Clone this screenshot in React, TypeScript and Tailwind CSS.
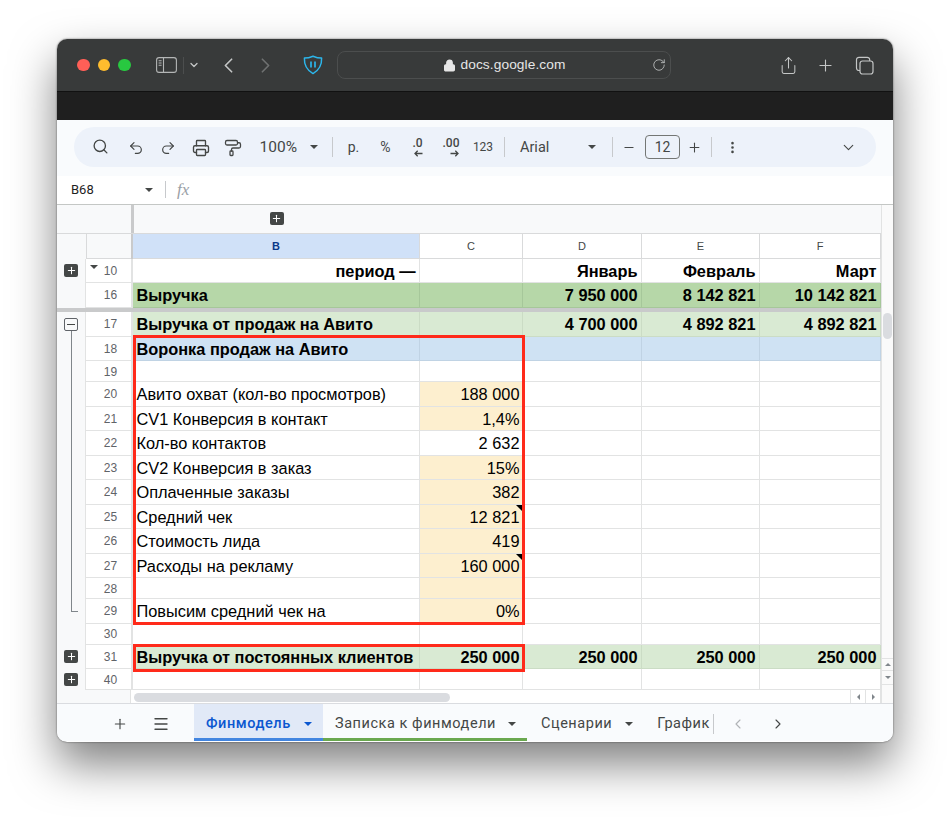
// Окно браузера с таблицей финмодели
import {
  ChevronDown,
  ChevronLeft,
  ChevronRight,
  Lock,
  Menu,
  Minus,
  MoreVertical,
  PaintRoller,
  Plus,
  Printer,
  Redo2,
  RotateCw,
  Search,
  Share,
  Undo2,
} from "lucide-react";

const ARIAL = "font-['Liberation_Sans',Arial,sans-serif]";
const UI = "font-['Roboto','Noto_Sans',sans-serif]";

interface Row {
  num: string;
  h: string;
  label?: string;
  c?: string;
  values?: string[];
  bold?: boolean;
  align?: string;
  bg?: string;
  line?: string;
  cBg?: string;
  note?: boolean;
  group?: "plus" | "minus" | "line" | "end";
}

const rows: Row[] = [
  { num: "10", h: "h-[24.5px]", label: "период —", values: ["Январь", "Февраль", "Март"], bold: true, align: "text-right", group: "plus" },
  { num: "16", h: "h-[24.5px]", label: "Выручка", values: ["7 950 000", "8 142 821", "10 142 821"], bold: true, bg: "bg-[#b6d7a8]", line: "border-[#a6c79a]" },
];

const rows2: Row[] = [
  { num: "17", h: "h-[24.5px]", label: "Выручка от продаж на Авито", values: ["4 700 000", "4 892 821", "4 892 821"], bold: true, bg: "bg-[#d9ead3]", line: "border-[#cbdcc5]", group: "minus" },
  { num: "18", h: "h-[24.5px]", label: "Воронка продаж на Авито", bold: true, bg: "bg-[#cfe2f3]", line: "border-[#c0d3e4]", group: "line" },
  { num: "19", h: "h-[21px]", group: "line" },
  { num: "20", h: "h-[24.5px]", label: "Авито охват (кол-во просмотров)", c: "188 000", cBg: "bg-[#fdefcf]", group: "line" },
  { num: "21", h: "h-[24.5px]", label: "CV1 Конверсия в контакт", c: "1,4%", cBg: "bg-[#fdefcf]", group: "line" },
  { num: "22", h: "h-[24.5px]", label: "Кол-во контактов", c: "2 632", group: "line" },
  { num: "23", h: "h-[24.5px]", label: "CV2 Конверсия в заказ", c: "15%", cBg: "bg-[#fdefcf]", group: "line" },
  { num: "24", h: "h-[24.5px]", label: "Оплаченные заказы", c: "382", cBg: "bg-[#fdefcf]", group: "line" },
  { num: "25", h: "h-[24.5px]", label: "Средний чек", c: "12 821", cBg: "bg-[#fdefcf]", note: true, group: "line" },
  { num: "26", h: "h-[24.5px]", label: "Стоимость лида", c: "419", cBg: "bg-[#fdefcf]", group: "line" },
  { num: "27", h: "h-[24.5px]", label: "Расходы на рекламу", c: "160 000", cBg: "bg-[#fdefcf]", note: true, group: "line" },
  { num: "28", h: "h-[21px]", cBg: "bg-[#fdefcf]", group: "line" },
  { num: "29", h: "h-[24.5px]", label: "Повысим средний чек на", c: "0%", cBg: "bg-[#fdefcf]", group: "end" },
  { num: "30", h: "h-[21px]" },
  { num: "31", h: "h-[24.5px]", label: "Выручка от постоянных клиентов", c: "250 000", values: ["250 000", "250 000", "250 000"], bold: true, bg: "bg-[#d9ead3]", line: "border-[#cbdcc5]", group: "plus" },
  { num: "40", h: "h-[21px]", group: "plus" },
];

function Caret({ className = "border-t-[#444746]" }: { className?: string }) {
  return <span className={`block w-0 h-0 border-x-[4px] border-x-transparent border-t-[4.5px] ${className}`} />;
}

function Divider() {
  return <span className="block w-px h-5 bg-[#c7c9cc]" />;
}

function PlusBox() {
  return (
    <span className="flex items-center justify-center w-[14px] h-[13px] rounded-[2px] bg-[#444746]">
      <Plus size={11} strokeWidth={2.2} className="text-white" />
    </span>
  );
}

function GroupCell({ group }: { group?: Row["group"] }) {
  return (
    <div className="relative w-[29px] h-full bg-[#f8f9fa] border-r border-[#e2e3e3] flex items-center justify-center">
      {group === "plus" && <PlusBox />}
      {group === "minus" && (
        <>
          <span className="z-10 flex items-center justify-center w-[14px] h-[13px] rounded-[2px] border border-[#5f6368] bg-[#f8f9fa]">
            <span className="block w-2 h-px bg-[#444746]" />
          </span>
          <span className="absolute left-[14px] top-[18px] bottom-0 w-px bg-[#80868b]" />
        </>
      )}
      {group === "line" && <span className="absolute left-[14px] top-0 bottom-0 w-px bg-[#80868b]" />}
      {group === "end" && (
        <>
          <span className="absolute left-[14px] top-0 h-[12px] w-px bg-[#80868b]" />
          <span className="absolute left-[14px] top-[12px] h-px w-[7px] bg-[#80868b]" />
        </>
      )}
    </div>
  );
}

function SheetRow({ row }: { row: Row }) {
  const line = row.line ?? "border-[#e2e3e3]";
  const text = `${ARIAL} text-[16.35px] text-black whitespace-nowrap pt-[1px] ${row.bold ? "font-bold" : ""}`;
  const cell = `h-full flex items-center justify-end pl-[3.5px] border-r border-b ${line} ${text}`;
  const values = row.values ?? ["", "", ""];
  return (
    <div className={`flex ${row.h} ${row.bg ?? ""}`}>
      <GroupCell group={row.group} />
      <div className={`relative w-[47px] h-full shrink-0 bg-white border-r-2 border-b border-[#e2e3e3] flex items-center justify-center pl-1 pt-[1px] text-[12px] text-[#5f6368] ${ARIAL}`}>
        {row.num === "10" && <span className="absolute left-[4px] top-[6px]"><Caret className="border-t-[#444746]" /></span>}
        {row.num}
      </div>
      <div className={`w-[287px] h-full flex items-center px-[3.5px] border-r border-b ${line} ${text} ${row.align ?? ""} ${row.align ? "justify-end" : ""}`}>
        {row.label}
      </div>
      <div className={`relative w-[103px] pr-[2.5px] ${cell} ${row.cBg ?? ""}`}>
        {row.c}
        {row.note && (
          <span className="absolute top-0 right-0 w-0 h-0 border-l-[6px] border-l-transparent border-t-[6px] border-t-black" />
        )}
      </div>
      <div className={`w-[119px] pr-[3.5px] ${cell}`}>{values[0]}</div>
      <div className={`w-[118px] pr-[3.5px] ${cell}`}>{values[1]}</div>
      <div className={`w-[121px] pr-[3.5px] ${cell}`}>{values[2]}</div>
    </div>
  );
}

function Slot({ w, children }: { w: string; children: React.ReactNode }) {
  return <div className={`${w} shrink-0 flex items-center justify-center`}>{children}</div>;
}

function TitleBar() {
  return (
    <div className="h-[53px] bg-[#383a3a] border-b border-[#111] flex items-center text-[#c4c6c6]">
      <div className="flex items-center gap-[8px] ml-[20px] w-[64px]">
        <span className="w-[12.5px] h-[12.5px] rounded-full bg-[#ff5f57]" />
        <span className="w-[12.5px] h-[12.5px] rounded-full bg-[#febc2e]" />
        <span className="w-[12.5px] h-[12.5px] rounded-full bg-[#28c840]" />
      </div>
      <svg width="21" height="16" viewBox="0 0 21 16" fill="none" stroke="#b4b6b6" strokeWidth="1.1" className="ml-[15px]">
        <rect x="0.6" y="0.6" width="19.8" height="14.8" rx="2.5" />
        <path d="M7.5 0.6v14.8M2.6 3.8h3M2.6 6h3M2.6 8.2h3" />
      </svg>
      <span className="ml-[6px] w-px h-[17px] bg-[#4c4e4e]" />
      <ChevronDown size={12} strokeWidth={2.6} className="ml-[4px]" />
      <ChevronLeft size={25} strokeWidth={1.6} className="ml-[16px]" />
      <ChevronRight size={25} strokeWidth={1.6} className="ml-[12px] text-[#6f7171]" />
      <svg width="20" height="20" viewBox="0 0 20 20" fill="none" className="ml-[25px]">
        <path d="M10 1.2c3 1.3 5.800 1.900 8.600 1.900 .3 6.500-2.400 12-8.600 15.500C3.800 15.100 1.100 9.600 1.400 3.100c2.800 0 5.600-.6 8.600-1.900z" stroke="#2cb5ea" strokeWidth="1.500" strokeLinejoin="round" />
        <path d="M8 6.500v6M12 6.500v6" stroke="#2cb5ea" strokeWidth="1.700" />
      </svg>
      <div className="relative ml-[14px] w-[334px] h-[28px] rounded-[8px] border border-[#4c4e4e] flex items-center justify-center gap-[5px] text-[13.7px] text-[#e6e6e6]">
        <Lock size={13} strokeWidth={2.4} fill="#e6e6e6" />
        <span className={`${ARIAL} font-medium tracking-[0.1px]`}>docs.google.com</span>
        <RotateCw size={14} strokeWidth={1.4} className="absolute right-[4px] top-[6px] text-[#c4c6c6]" />
      </div>
      <Share size={19} strokeWidth={1.3} className="ml-[108px]" />
      <Plus size={19} strokeWidth={1.4} className="ml-[18px]" />
      <svg width="19" height="19" viewBox="0 0 19 19" fill="none" stroke="#c4c6c6" strokeWidth="1.2" className="ml-[20px]">
        <rect x="5" y="5" width="13" height="13" rx="2.5" />
        <path d="M5 14.500h-1a2.500 2.500 0 0 1-2.500-2.500V3.800a2.500 2.500 0 0 1 2.500-2.500h8.200a2.500 2.500 0 0 1 2.500 2.500V5" />
      </svg>
    </div>
  );
}

function DecimalIcon({ label, dir }: { label: string; dir: "left" | "right" }) {
  return (
    <span className="flex flex-col items-end text-[12px] font-medium leading-none">
      <span>{label}</span>
      <svg width="9" height="7" viewBox="0 0 9 7" fill="none" stroke="#444746" strokeWidth="1.300" className="mt-[1px]">
        {dir === "left" ? <path d="M8.500 3.500H1.200M3.700 .8L1 3.500l2.700 2.700" /> : <path d="M.5 3.500h7.300M5.300 .8L8 3.500 5.300 6.200" />}
      </svg>
    </span>
  );
}

function Toolbar() {
  const icon = "text-[#444746]";
  return (
    <div className="h-[56px] bg-[#f9fbfd] pt-[7px] pl-[17px] pr-[17px]">
      <div className={`h-[40px] rounded-[20px] bg-[#edf2fa] flex items-center text-[#444746] ${UI}`}>
        <div className="w-[10px] shrink-0" />
        <Slot w="w-[32px]"><Search size={17} strokeWidth={1.9} className={`${icon} -mt-[1px]`} /></Slot>
        <Slot w="w-[40px]"><Undo2 size={16} strokeWidth={1.8} className={`${icon} mt-[2px]`} /></Slot>
        <Slot w="w-[24px]"><Redo2 size={16} strokeWidth={1.8} className={`${icon} mt-[2px]`} /></Slot>
        <Slot w="w-[42px]"><Printer size={18} strokeWidth={1.8} className={`${icon} mt-[1px]`} /></Slot>
        <Slot w="w-[22px]"><PaintRoller size={18} strokeWidth={1.7} className={`${icon} mt-[1px]`} /></Slot>
        <Slot w="w-[53px] justify-end text-[15.5px] pt-[2px]">100%</Slot>
        <Slot w="w-[34px]"><Caret /></Slot>
        <Slot w="w-[3px]"><Divider /></Slot>
        <Slot w="w-[39px] text-[14px]">р.</Slot>
        <Slot w="w-[25px] text-[14px]">%</Slot>
        <Slot w="w-[39px]"><DecimalIcon label=".0" dir="left" /></Slot>
        <Slot w="w-[28px]"><DecimalIcon label=".00" dir="right" /></Slot>
        <Slot w="w-[36px] text-[12px]">123</Slot>
        <Slot w="w-[6px]"><Divider /></Slot>
        <span className="ml-[13px] w-[62px] text-[14.5px] pt-[1px]">Arial</span>
        <Slot w="w-[20px]"><Caret /></Slot>
        <Slot w="w-[20px]"><Divider /></Slot>
        <Slot w="w-[14px]"><Minus size={15} strokeWidth={1.7} /></Slot>
        <div className="ml-[9px] w-[35px] h-[24px] rounded-[4px] border border-[#747775] flex items-center justify-center text-[14px]">12</div>
        <Slot w="w-[29px]"><Plus size={15} strokeWidth={1.7} /></Slot>
        <Slot w="w-[5px]"><Divider /></Slot>
        <Slot w="w-[37px]"><MoreVertical size={15} strokeWidth={2.2} /></Slot>
        <Slot w="w-[106px] justify-end"><ChevronDown size={17} strokeWidth={1.6} /></Slot>
      </div>
    </div>
  );
}

function FormulaBar() {
  return (
    <div className={`h-[28.5px] bg-white border-b border-[#c4c7c5] flex items-center text-[13px] text-[#1f1f1f] ${UI}`}>
      <span className={`ml-[14px] w-[74px] ${UI}`}>B68</span>
      <Caret />
      <span className="ml-[12px] w-px h-[17px] bg-[#c7c9cc]" />
      <span className="ml-[11px] font-['Liberation_Serif',serif] italic text-[17px] text-[#9aa0a6]">fx</span>
    </div>
  );
}

function SheetGrid() {
  const head = `h-full flex items-center justify-center border-r border-b border-[#d9dadb] text-[11px] text-[#444746] ${ARIAL}`;
  return (
    <div className="relative flex h-[498.5px] bg-white">
      <div className="w-[824px] shrink-0 flex flex-col">
        {/* группы колонок */}
        <div className="flex h-[29.5px] bg-[#f8f9fa] border-b border-[#d9dadb]">
          <div className="w-[74px] shrink-0" />
          <div className="w-[2.5px] bg-[#c9cacb]" />
          <div className="w-[287px] flex items-center justify-center pr-[1px]"><PlusBox /></div>
        </div>
        {/* заголовки колонок */}
        <div className="flex h-[24.5px]">
          <div className="w-[29px] bg-[#f8f9fa]" />
          <div className="w-[45px] bg-[#f8f9fa] border-l border-b border-[#d9dadb]" />
          <div className="w-[2px] bg-[#c9cacb]" />
          <div className="w-[287px] h-full flex items-center justify-center bg-[#d0e1f8] border-r border-b border-[#d9dadb] text-[11px] font-bold text-[#0b3a8a]">
            <span className={ARIAL}>B</span>
          </div>
          <div className={`w-[103px] ${head}`}>C</div>
          <div className={`w-[119px] ${head}`}>D</div>
          <div className={`w-[118px] ${head}`}>E</div>
          <div className={`w-[121px] ${head}`}>F</div>
        </div>
        {rows.map((row) => <SheetRow key={row.num} row={row} />)}
        <div className="h-[4.5px] bg-[#c9cacb]" />
        {rows2.map((row) => <SheetRow key={row.num} row={row} />)}
        {/* горизонтальная прокрутка */}
        <div className="flex-1 flex items-center bg-white">
          <div className="w-[74px] h-full bg-[#f8f9fa] border-r border-[#e2e3e3]" />
          <div className="ml-[3px] mt-[1px] w-[316px] h-[9px] rounded-full bg-[#dadce0]" />
          <div className="ml-auto w-[15px] h-full border-l border-[#e2e3e3] flex items-center justify-center"><span className="w-0 h-0 border-y-[3px] border-y-transparent border-r-[3.5px] border-r-[#80868b]" /></div>
          <div className="w-[16px] h-full border-x border-[#e2e3e3] flex items-center justify-center"><span className="w-0 h-0 border-y-[3px] border-y-transparent border-l-[3.5px] border-l-[#80868b]" /></div>
        </div>
      </div>
      {/* вертикальная прокрутка */}
      <div className="flex-1 flex flex-col border-l border-[#e2e3e3] bg-[#fafafa] pt-[108px] items-center">
        <div className="w-[9px] h-[26px] rounded-full bg-[#dadce0]" />
        <div className="mt-[319px] w-full h-[13px] border-y border-[#e2e3e3] flex items-center justify-center"><span className="w-0 h-0 border-x-[3px] border-x-transparent border-b-[3.5px] border-b-[#80868b]" /></div>
        <div className="w-full h-[14px] border-b border-[#e2e3e3] flex items-center justify-center"><span className="w-0 h-0 border-x-[3px] border-x-transparent border-t-[3.5px] border-t-[#80868b]" /></div>
      </div>
      {/* красные рамки */}
      <div className="absolute left-[76px] top-[130px] w-[392px] h-[290.5px] border-[3px] border-[#ff2a1a]" />
      <div className="absolute left-[76px] top-[439px] w-[392px] h-[28px] border-[3px] border-[#ff2a1a]" />
    </div>
  );
}

function TabBar() {
  return (
    <div className={`h-[38px] bg-[#f9fbfd] border-t border-[#dadce0] flex items-stretch text-[14.5px] tracking-[0.55px] text-[#444746] ${UI}`}>
      <Slot w="ml-[51px] w-[24px] pt-[2px]"><Plus size={16} strokeWidth={1.7} /></Slot>
      <Slot w="ml-[12px] w-[34px] pt-[2px]"><Menu size={18} strokeWidth={1.8} /></Slot>
      <div className="ml-[16px] w-[129px] shrink-0 bg-[#e1e9f7] border-b-[3px] border-[#4285e0] flex items-center pl-[12px] pt-[5px] font-medium text-[#0b57d0]">
        Финмодель
        <span className="ml-[13px]"><Caret className="border-t-[#0b57d0]" /></span>
      </div>
      <div className="w-[204px] shrink-0 border-b-[3px] border-[#6aa84f] flex items-center pl-[12px] pt-[5px]">
        Записка к финмодели
        <span className="ml-[12px]"><Caret /></span>
      </div>
      <div className="flex items-center pl-[14px] pt-[2px]">
        Сценарии
        <span className="ml-[13px]"><Caret /></span>
      </div>
      <div className="flex items-center pl-[24px] pt-[2px]">
        График
        <span className="ml-[3px] w-px h-[20px] bg-[#c7c9cc]" />
      </div>
      <ChevronLeft size={16} strokeWidth={1.7} className="self-center ml-[16px] mt-[2px] text-[#b0b3b6]" />
      <ChevronRight size={16} strokeWidth={1.7} className="self-center ml-[24px] mt-[2px]" />
    </div>
  );
}

export default function App() {
  return (
    <div className="w-[950px] h-[817px] bg-white pt-[39px] pl-[57px] overflow-hidden">
      <div className="w-[836px] h-[702.5px] rounded-[10px] overflow-hidden bg-white shadow-[0_22px_45px_rgba(0,0,0,0.5),0_0_2px_rgba(0,0,0,0.6)]">
        <TitleBar />
        <div className="h-[28px] bg-[#1f1f1f]" />
        <Toolbar />
        <FormulaBar />
        <SheetGrid />
        <TabBar />
      </div>
    </div>
  );
}
